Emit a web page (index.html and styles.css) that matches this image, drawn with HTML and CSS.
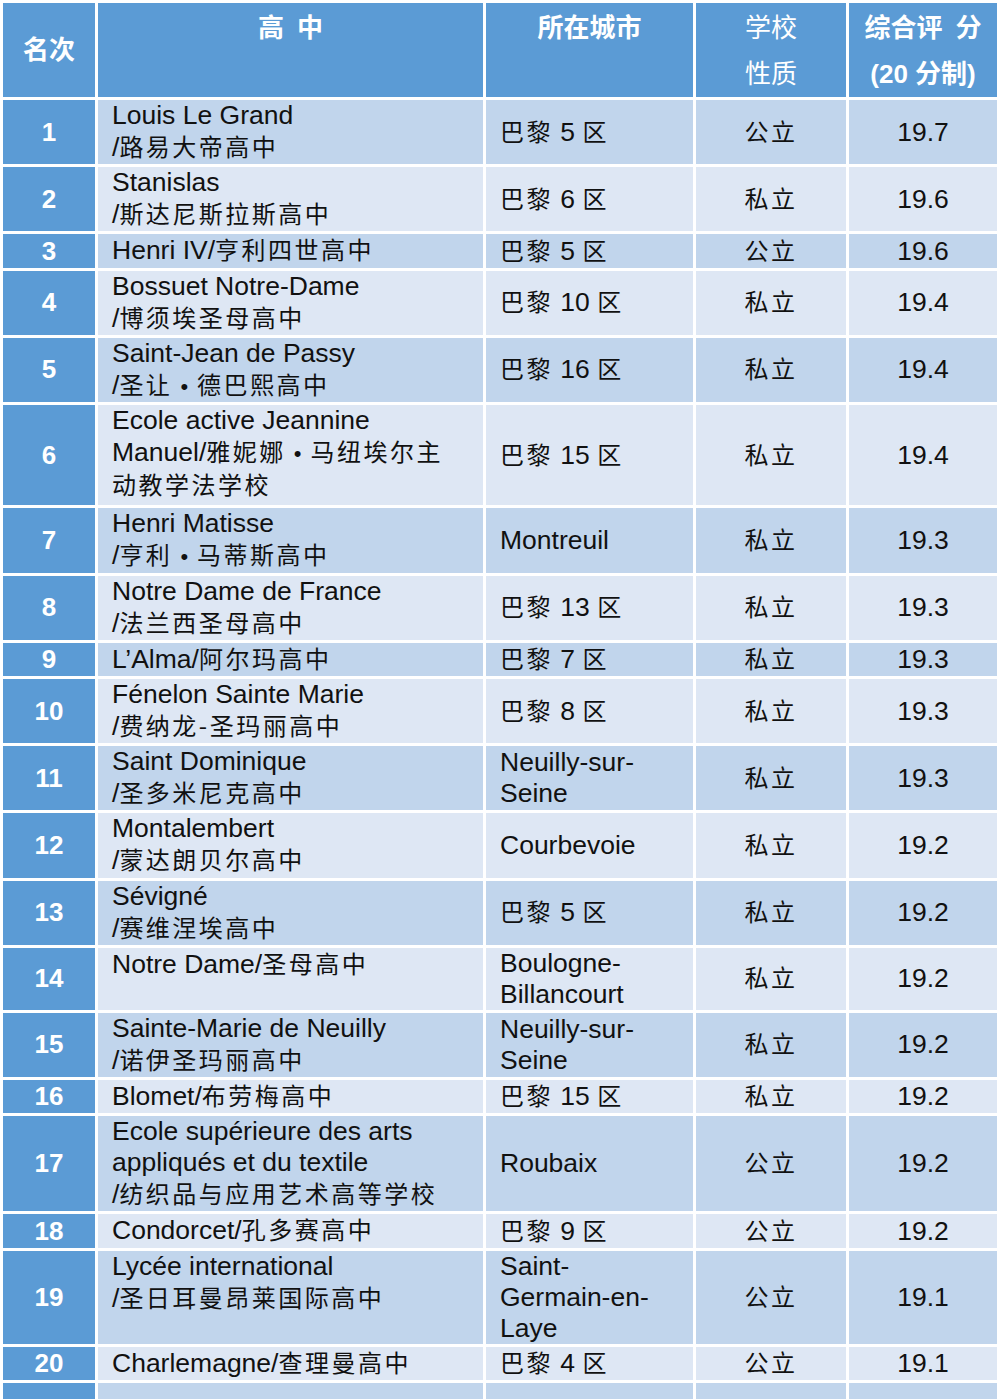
FILE: index.html
```html
<!DOCTYPE html>
<html lang="zh-CN">
<head>
<meta charset="utf-8">
<title>巴黎地区高中排名</title>
<link rel="stylesheet" href="styles.css">
</head>
<body>
<table class="ranking">
  <colgroup>
    <col class="c-rank">
    <col class="c-name">
    <col class="c-city">
    <col class="c-type">
    <col class="c-score">
  </colgroup>
  <thead>
    <tr>
      <th class="h-rank">名次</th>
      <th>高&ensp;中</th>
      <th>所在城市</th>
      <th class="h-type">学校<br>性质</th>
      <th>综合评&ensp;分<br>(20 分制)</th>
    </tr>
  </thead>
  <tbody>
    <tr><td class="rank">1</td><td class="name">Louis Le Grand<br><span class="mx">/<span class="zh">路易大帝高中</span></span></td><td class="city"><span class="zh">巴黎</span> 5 <span class="zh">区</span></td><td class="type"><span class="zh">公立</span></td><td class="score">19.7</td></tr>
    <tr><td class="rank">2</td><td class="name">Stanislas<br><span class="mx">/<span class="zh">斯达尼斯拉斯高中</span></span></td><td class="city"><span class="zh">巴黎</span> 6 <span class="zh">区</span></td><td class="type"><span class="zh">私立</span></td><td class="score">19.6</td></tr>
    <tr><td class="rank">3</td><td class="name"><span class="mx">Henri IV/<span class="zh">亨利四世高中</span></span></td><td class="city"><span class="zh">巴黎</span> 5 <span class="zh">区</span></td><td class="type"><span class="zh">公立</span></td><td class="score">19.6</td></tr>
    <tr><td class="rank">4</td><td class="name">Bossuet Notre-Dame<br><span class="mx">/<span class="zh">博须埃圣母高中</span></span></td><td class="city"><span class="zh">巴黎</span> 10 <span class="zh">区</span></td><td class="type"><span class="zh">私立</span></td><td class="score">19.4</td></tr>
    <tr><td class="rank">5</td><td class="name">Saint-Jean de Passy<br><span class="mx">/<span class="zh">圣让</span><span class="dot">•</span><span class="zh">德巴熙高中</span></span></td><td class="city"><span class="zh">巴黎</span> 16 <span class="zh">区</span></td><td class="type"><span class="zh">私立</span></td><td class="score">19.4</td></tr>
    <tr class="tall"><td class="rank">6</td><td class="name">Ecole active Jeannine<br><span class="mx">Manuel/<span class="zh">雅妮娜</span><span class="dot">•</span><span class="zh">马纽埃尔主</span></span><br><span class="mx"><span class="zh">动教学法学校</span></span></td><td class="city"><span class="zh">巴黎</span> 15 <span class="zh">区</span></td><td class="type"><span class="zh">私立</span></td><td class="score">19.4</td></tr>
    <tr><td class="rank">7</td><td class="name">Henri Matisse<br><span class="mx">/<span class="zh">亨利</span><span class="dot">•</span><span class="zh">马蒂斯高中</span></span></td><td class="city">Montreuil</td><td class="type"><span class="zh">私立</span></td><td class="score">19.3</td></tr>
    <tr><td class="rank">8</td><td class="name">Notre Dame de France<br><span class="mx">/<span class="zh">法兰西圣母高中</span></span></td><td class="city"><span class="zh">巴黎</span> 13 <span class="zh">区</span></td><td class="type"><span class="zh">私立</span></td><td class="score">19.3</td></tr>
    <tr><td class="rank">9</td><td class="name"><span class="mx">L’Alma/<span class="zh">阿尔玛高中</span></span></td><td class="city"><span class="zh">巴黎</span> 7 <span class="zh">区</span></td><td class="type"><span class="zh">私立</span></td><td class="score">19.3</td></tr>
    <tr><td class="rank">10</td><td class="name">Fénelon Sainte Marie<br><span class="mx">/<span class="zh">费纳龙-圣玛丽高中</span></span></td><td class="city"><span class="zh">巴黎</span> 8 <span class="zh">区</span></td><td class="type"><span class="zh">私立</span></td><td class="score">19.3</td></tr>
    <tr><td class="rank">11</td><td class="name">Saint Dominique<br><span class="mx">/<span class="zh">圣多米尼克高中</span></span></td><td class="city">Neuilly-sur-<br>Seine</td><td class="type"><span class="zh">私立</span></td><td class="score">19.3</td></tr>
    <tr><td class="rank">12</td><td class="name">Montalembert<br><span class="mx">/<span class="zh">蒙达朗贝尔高中</span></span></td><td class="city">Courbevoie</td><td class="type"><span class="zh">私立</span></td><td class="score">19.2</td></tr>
    <tr><td class="rank">13</td><td class="name">Sévigné<br><span class="mx">/<span class="zh">赛维涅埃高中</span></span></td><td class="city"><span class="zh">巴黎</span> 5 <span class="zh">区</span></td><td class="type"><span class="zh">私立</span></td><td class="score">19.2</td></tr>
    <tr><td class="rank">14</td><td class="name"><span class="mx">Notre Dame/<span class="zh">圣母高中</span></span></td><td class="city">Boulogne-<br>Billancourt</td><td class="type"><span class="zh">私立</span></td><td class="score">19.2</td></tr>
    <tr><td class="rank">15</td><td class="name">Sainte-Marie de Neuilly<br><span class="mx">/<span class="zh">诺伊圣玛丽高中</span></span></td><td class="city">Neuilly-sur-<br>Seine</td><td class="type"><span class="zh">私立</span></td><td class="score">19.2</td></tr>
    <tr><td class="rank">16</td><td class="name"><span class="mx">Blomet/<span class="zh">布劳梅高中</span></span></td><td class="city"><span class="zh">巴黎</span> 15 <span class="zh">区</span></td><td class="type"><span class="zh">私立</span></td><td class="score">19.2</td></tr>
    <tr><td class="rank">17</td><td class="name">Ecole supérieure des arts<br>appliqués et du textile<br><span class="mx">/<span class="zh">纺织品与应用艺术高等学校</span></span></td><td class="city">Roubaix</td><td class="type"><span class="zh">公立</span></td><td class="score">19.2</td></tr>
    <tr><td class="rank">18</td><td class="name"><span class="mx">Condorcet/<span class="zh">孔多赛高中</span></span></td><td class="city"><span class="zh">巴黎</span> 9 <span class="zh">区</span></td><td class="type"><span class="zh">公立</span></td><td class="score">19.2</td></tr>
    <tr><td class="rank">19</td><td class="name">Lycée international<br><span class="mx">/<span class="zh">圣日耳曼昂莱国际高中</span></span></td><td class="city">Saint-<br>Germain-en-<br>Laye</td><td class="type"><span class="zh">公立</span></td><td class="score">19.1</td></tr>
    <tr><td class="rank">20</td><td class="name"><span class="mx">Charlemagne/<span class="zh">查理曼高中</span></span></td><td class="city"><span class="zh">巴黎</span> 4 <span class="zh">区</span></td><td class="type"><span class="zh">公立</span></td><td class="score">19.1</td></tr>
    <tr class="blank"><td class="rank"></td><td class="name"></td><td class="city"></td><td class="type"></td><td class="score"></td></tr>
  </tbody>
</table>
</body>
</html>
```

FILE: styles.css
```css
html, body {
  margin: 0;
  padding: 0;
  background: #ffffff;
}

body {
  font-family: "Liberation Sans", Arial, "Noto Sans CJK SC", sans-serif;
  color: #111111;
}

.ranking {
  width: 1000px;
  table-layout: fixed;
  border-collapse: separate;
  border-spacing: 3px;
  background: #ffffff;
}

.c-rank { width: 92px; }
.c-name { width: 385px; }
.c-city { width: 207px; }
.c-type { width: 150px; }
.c-score { width: 148px; }

.ranking th {
  height: 92px;
  padding: 2px 0 0;
  box-sizing: border-box;
  background: #5b9bd5;
  color: #ffffff;
  font-family: "Liberation Sans", "Noto Sans CJK SC", sans-serif;
  font-size: 26px;
  font-weight: 700;
  line-height: 46px;
  text-align: center;
  vertical-align: top;
}

.ranking th.h-rank {
  vertical-align: middle;
  padding: 0;
}

.ranking th.h-type {
  font-weight: 400;
}

.ranking td {
  padding: 0 14px;
  font-size: 26.5px;
  line-height: 31px;
  vertical-align: middle;
  text-align: left;
  white-space: nowrap;
}

.ranking tbody tr:nth-child(odd) td {
  background: #c1d5ec;
}

.ranking tbody tr:nth-child(even) td {
  background: #dee7f4;
}

.ranking tbody tr td.rank {
  background: #5b9bd5;
  color: #ffffff;
  font-weight: 700;
  font-size: 26px;
  text-align: center;
  padding: 0;
}

.ranking td.name {
  vertical-align: top;
}

.ranking tr.tall td.name {
  padding-bottom: 3px;
}

.ranking td.type,
.ranking td.score {
  text-align: center;
  padding: 0;
}

.ranking tr.blank td {
  height: 33px;
}

.mx {
  line-height: 33.2px;
}

.dot {
  margin: 0 9px 0 8px;
  font-size: 22px;
  line-height: 20px;
}

.zh {
  font-family: "Noto Sans CJK SC", sans-serif;
  font-size: 24px;
  letter-spacing: 2.5px;
  line-height: 20px;
  font-weight: 400;
}
```
